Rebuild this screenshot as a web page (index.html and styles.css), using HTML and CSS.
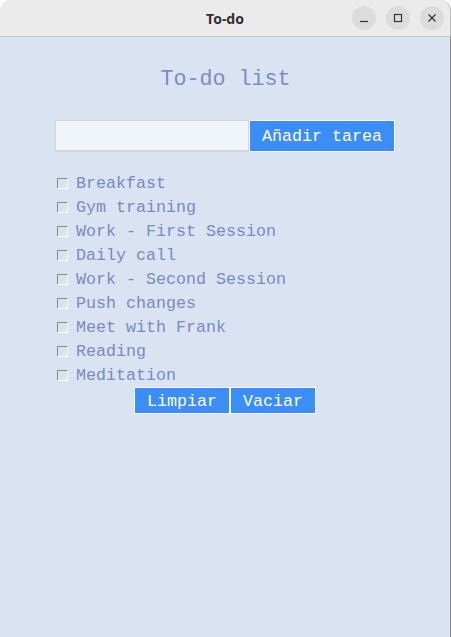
FILE: index.html
```html
<!DOCTYPE html>
<html>
<head>
<meta charset="utf-8">
<link rel="stylesheet" href="styles.css">
</head>
<body>
<div class="window">
  <div class="titlebar">
    <div></div>
    <div class="wtitle">To-do</div>
    <div class="controls">
      <span class="ctl"><svg width="24" height="24" viewBox="0 0 24 24"><path d="M8 15.5h8" stroke="#333" stroke-width="1.2"/></svg></span>
      <span class="ctl"><svg width="24" height="24" viewBox="0 0 24 24"><rect x="8.5" y="8.5" width="7" height="7" fill="none" stroke="#333" stroke-width="1.2"/></svg></span>
      <span class="ctl"><svg width="24" height="24" viewBox="0 0 24 24"><path d="M8.5 8.5l7 7M15.5 8.5l-7 7" stroke="#333" stroke-width="1.2"/></svg></span>
    </div>
  </div>
  <div class="content">
    <h1 class="title">To-do list</h1>
    <div class="entry-row">
      <div class="entry"></div>
      <button class="btn btn-add">Añadir tarea</button>
    </div>
    <ul class="tasks">
      <li class="task"><span class="check"></span><span>Breakfast</span></li>
      <li class="task"><span class="check"></span><span>Gym training</span></li>
      <li class="task"><span class="check"></span><span>Work - First Session</span></li>
      <li class="task"><span class="check"></span><span>Daily call</span></li>
      <li class="task"><span class="check"></span><span>Work - Second Session</span></li>
      <li class="task"><span class="check"></span><span>Push changes</span></li>
      <li class="task"><span class="check"></span><span>Meet with Frank</span></li>
      <li class="task"><span class="check"></span><span>Reading</span></li>
      <li class="task"><span class="check"></span><span>Meditation</span></li>
    </ul>
    <div class="actions">
      <button class="btn btn-small">Limpiar</button>
      <button class="btn btn-small">Vaciar</button>
    </div>
  </div>
</div>
</body>
</html>
```
FILE: styles.css
```css
html, body {
  margin: 0;
  padding: 0;
  background: #ffffff;
}
.window {
  width: 451px;
  height: 637px;
  display: flex;
  flex-direction: column;
  box-sizing: border-box;
}
.titlebar {
  height: 37px;
  box-sizing: border-box;
  background: #ebebeb;
  border-bottom: 1px solid #c4c4c4;
  border-top-left-radius: 11px;
  border-top-right-radius: 11px;
  border-right: 1px solid #b8b8b8;
  display: grid;
  grid-template-columns: 1fr auto 1fr;
  align-items: center;
}
.wtitle {
  font-family: "Noto Sans", "DejaVu Sans", sans-serif;
  font-weight: bold;
  font-size: 14px;
  color: #303030;
}
.controls {
  display: flex;
  justify-content: flex-end;
  gap: 10px;
  padding-right: 6px;
}
.ctl {
  width: 24px;
  height: 24px;
  border-radius: 50%;
  background: #dcdcdc;
  display: block;
}
.ctl svg { display: block; }
.content {
  flex: 1;
  background: #d9e3f1;
  border-right: 1px solid #8c8c8c;
  display: flex;
  flex-direction: column;
  align-items: center;
  font-family: "Liberation Mono", "DejaVu Sans Mono", monospace;
  color: #7b8bbf;
}
.title {
  margin: 31px 0 0 0;
  padding-left: 1px;
  font-size: 21.7px;
  line-height: 24px;
  font-weight: normal;
  color: #7d8dbf;
}
.entry-row {
  margin-top: 28px;
  display: flex;
  width: 340px;
}
.entry {
  width: 194px;
  height: 32px;
  box-sizing: border-box;
  background: #eff4f8;
  border: 1px solid #d3d7dc;
  border-width: 1px 1px 2px 1px;
}
.btn {
  font-family: "Liberation Mono", "DejaVu Sans Mono", monospace;
  font-size: 16.67px;
  color: #ffffff;
  background: #3b8ef8;
  border: 1px solid #ffffff;
  padding: 3px 12px 0 12px;
  margin: 0;
  box-sizing: border-box;
  line-height: 1;
}
.btn-add {
  height: 32px;
  width: 146px;
}
.tasks {
  list-style: none;
  margin: 19px 0 0 0;
  padding: 0 0 0 2px;
  width: 338px;
}
.task {
  height: 24px;
  display: flex;
  align-items: center;
  font-size: 16.67px;
}
.task span:last-child {
  padding-top: 1px;
}
.check {
  width: 11px;
  height: 11px;
  box-sizing: border-box;
  border-top: 1px solid #8a8a8a;
  border-left: 1px solid #8a8a8a;
  border-right: 1px solid #ffffff;
  border-bottom: 1px solid #ffffff;
  background: #d9e3f1;
  margin-right: 8px;
  flex: none;
}
.actions {
  display: flex;
}
.btn-small {
  height: 27px;
}
```
